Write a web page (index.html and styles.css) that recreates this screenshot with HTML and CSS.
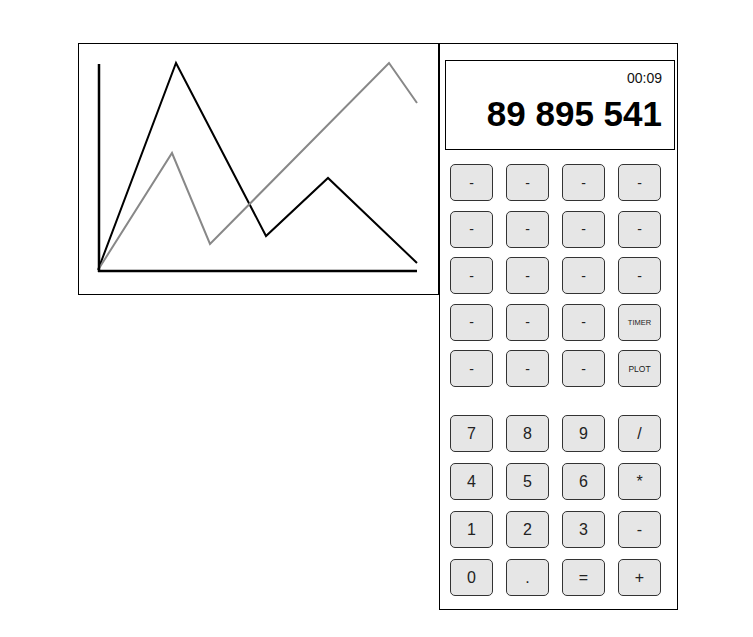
FILE: index.html
```html
<!DOCTYPE html>
<html>
<head>
<meta charset="UTF-8">
<title>Calculator</title>
<link rel="stylesheet" href="styles.css">
</head>
<body>
    <div class="page">
        <div class="plot">
            <svg class="plot-svg" width="359" height="250" viewBox="0 0 359 250">
                <polyline class="line-a" points="19,226 97,19 187,192 249,134 338,219"/>
                <polyline class="line-b" points="19,226 93,109 131,200 310,19 338,59"/>
                <line class="axis" x1="20" y1="20" x2="20" y2="228"/>
                <line class="axis" x1="19" y1="227" x2="338" y2="227"/>
            </svg>
        </div>
        <div class="calc">
            <div class="display">
                <div class="timer">00:09</div>
                <div class="result">89 895 541</div>
            </div>
            <div class="keys keys-fn">
                <button class="key">-</button>
                <button class="key">-</button>
                <button class="key">-</button>
                <button class="key">-</button>
                <button class="key">-</button>
                <button class="key">-</button>
                <button class="key">-</button>
                <button class="key">-</button>
                <button class="key">-</button>
                <button class="key">-</button>
                <button class="key">-</button>
                <button class="key">-</button>
                <button class="key">-</button>
                <button class="key">-</button>
                <button class="key">-</button>
                <button class="key key-timer">TIMER</button>
                <button class="key">-</button>
                <button class="key">-</button>
                <button class="key">-</button>
                <button class="key key-plot">PLOT</button>
            </div>
            <div class="keys keys-num">
                <button class="key">7</button>
                <button class="key">8</button>
                <button class="key">9</button>
                <button class="key">/</button>
                <button class="key">4</button>
                <button class="key">5</button>
                <button class="key">6</button>
                <button class="key">*</button>
                <button class="key">1</button>
                <button class="key">2</button>
                <button class="key">3</button>
                <button class="key">-</button>
                <button class="key">0</button>
                <button class="key">.</button>
                <button class="key">=</button>
                <button class="key">+</button>
            </div>
        </div>
    </div>
</body>
</html>
```

FILE: styles.css
```css
* { padding: 0; margin: 0; box-sizing: border-box; }
html, body {
    width: 100%;
    height: 100%;
    background: #fff;
}
body {
    font-family: "Liberation Sans", Arial, sans-serif;
    color: #222;
}
.page {
    display: flex;
    align-items: flex-start;
    padding: 43px 0 0 78px;
}
.plot {
    width: 361px;
    height: 252px;
    border: 1px solid #000;
}
.plot-svg {
    display: block;
}
.plot-svg polyline {
    fill: none;
    stroke-width: 2;
    stroke-linejoin: miter;
}
.line-a {
    stroke: #000;
}
.line-b {
    stroke: #888;
}
.axis {
    stroke: #000;
    stroke-width: 2.5;
}
.calc {
    width: 239px;
    height: 567px;
    border: 1px solid #000;
    padding: 16px 0 0 5px;
}
.display {
    width: 230px;
    height: 90px;
    border: 1px solid #000;
    padding: 9px 12px 0 0;
    text-align: right;
}
.timer {
    font-size: 14px;
    line-height: 17px;
    color: #111;
}
.result {
    margin-top: 7px;
    font-size: 35px;
    font-weight: bold;
    color: #000;
}
.keys {
    display: grid;
    grid-template-columns: repeat(4, 43px);
    grid-auto-rows: 37px;
    column-gap: 13px;
    padding-left: 5px;
}
.keys-fn {
    margin-top: 14px;
    row-gap: 9.5px;
}
.keys-num {
    margin-top: 28px;
    row-gap: 11px;
}
.key {
    font-family: "Liberation Sans", Arial, sans-serif;
    font-size: 16px;
    color: #222;
    background: #e6e6e6;
    border: 1px solid #333;
    border-radius: 5px;
}
.keys-fn .key {
    font-size: 14px;
}
.key-timer {
    font-size: 7.5px !important;
}
.key-plot {
    font-size: 8.5px !important;
}
```
